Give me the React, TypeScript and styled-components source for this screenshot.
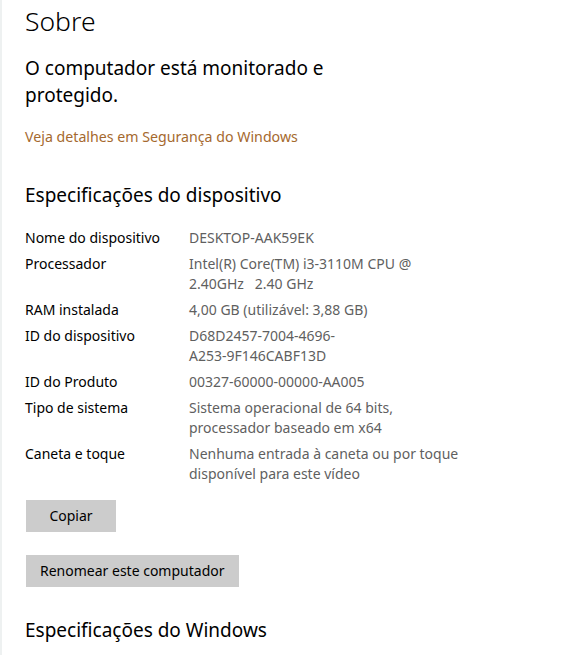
import React from "react";
import styled, { createGlobalStyle } from "styled-components";

const Global = createGlobalStyle`
  html, body { margin: 0; padding: 0; background: #ffffff; }
  body { font-family: "Noto Sans", "Open Sans", sans-serif; color: #000; }
`;

const Page = styled.div`
  min-height: 655px;
  box-sizing: border-box;
  border-left: 2px solid #eef1f1;
  padding: 3px 0 0 23px;
  display: flex;
  flex-direction: column;
  align-items: flex-start;
`;

const Title = styled.h1`
  margin: 0;
  font-size: 26.5px;
  line-height: 36px;
  font-weight: 300;
`;

const Status = styled.p`
  margin: 16px 0 0;
  font-size: 19px;
  line-height: 27px;
  font-weight: 400;
`;

const Link = styled.a`
  margin-top: 18px;
  font-size: 14.2px;
  line-height: 20px;
  color: #a5692e;
  text-decoration: none;
  cursor: pointer;
`;

const SectionTitle = styled.h2<{ $gap: number }>`
  margin: ${(p) => p.$gap}px 0 0;
  font-size: 19px;
  line-height: 28px;
  font-weight: 400;
`;

const Specs = styled.dl`
  margin: 19px 0 0;
  display: grid;
  grid-template-columns: 164px 300px;
  row-gap: 6px;
  font-size: 14px;
  line-height: 20px;
`;

const Label = styled.dt`
  margin: 0;
  color: #000;
`;

const Value = styled.dd`
  margin: 0;
  color: #5f5f5f;
  white-space: pre;
`;

const Button = styled.button<{ $gap: number }>`
  margin-top: ${(p) => p.$gap}px;
  margin-left: 1px;
  height: 32px;
  padding: 0 14px;
  min-width: 90px;
  border: none;
  background: #cccccc;
  color: #000;
  font-family: inherit;
  font-size: 14px;
  line-height: 20px;
  cursor: pointer;
`;

const specs: [string, string][] = [
  ["Nome do dispositivo", "DESKTOP-AAK59EK"],
  ["Processador", "Intel(R) Core(TM) i3-3110M CPU @\n2.40GHz   2.40 GHz"],
  ["RAM instalada", "4,00 GB (utilizável: 3,88 GB)"],
  ["ID do dispositivo", "D68D2457-7004-4696-\nA253-9F146CABF13D"],
  ["ID do Produto", "00327-60000-00000-AA005"],
  ["Tipo de sistema", "Sistema operacional de 64 bits,\nprocessador baseado em x64"],
  ["Caneta e toque", "Nenhuma entrada à caneta ou por toque\ndisponível para este vídeo"],
];

export default function App() {
  return (
    <>
      <Global />
      <Page>
        <Title>Sobre</Title>
        <Status>
          O computador está monitorado e
          <br />
          protegido.
        </Status>
        <Link>Veja detalhes em Segurança do Windows</Link>
        <SectionTitle $gap={34}>Especificações do dispositivo</SectionTitle>
        <Specs>
          {specs.map(([k, v]) => (
            <React.Fragment key={k}>
              <Label>{k}</Label>
              <Value>{v}</Value>
            </React.Fragment>
          ))}
        </Specs>
        <Button $gap={16}>Copiar</Button>
        <Button $gap={23}>Renomear este computador</Button>
        <SectionTitle $gap={29}>Especificações do Windows</SectionTitle>
      </Page>
    </>
  );
}
